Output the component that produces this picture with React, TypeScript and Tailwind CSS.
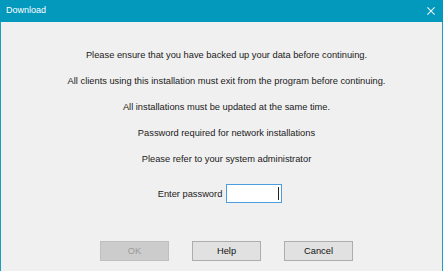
import React from "react";

export default function App() {
  const font = { fontFamily: '"Liberation Sans", Arial, sans-serif' };
  return (
    <div className="w-[444px] h-[271px] bg-white overflow-hidden" style={font}>
      <div className="w-[443px] h-[271px] flex flex-col border-x border-[#1a9fc0] bg-[#f0f0f0]">
        <div className="h-[22px] shrink-0 bg-[#0399bd] flex items-center justify-between pl-[6px] pr-[7px] -mx-px">
          <span className="text-[9px] text-white">Download</span>
          <svg width="8" height="8" viewBox="0 0 8 8" className="mr-[1px]">
            <path d="M0.4 0.4 L7.6 7.6 M7.6 0.4 L0.4 7.6" stroke="#e8f6fa" strokeWidth="1.1" fill="none" />
          </svg>
        </div>
        <div className="flex flex-col items-center pt-[25px] pl-[10px] text-[9.3px] leading-[16px] text-[#1a1a1a]">
          <div className="flex flex-col items-center gap-[10px]">
            <p>Please ensure that you have backed up your data before continuing.</p>
            <p>All clients using this installation must exit from the program before continuing.</p>
            <p>All installations must be updated at the same time.</p>
            <p>Password required for network installations</p>
            <p>Please refer to your system administrator</p>
          </div>
          <div className="mt-[17px] flex items-center gap-[4px] -ml-[13px]">
            <span>Enter password</span>
            <div className="w-[56px] h-[19px] border border-[#4c9ee0] bg-white flex items-center justify-end pr-[2px]">
              <div className="w-px h-[13px] bg-[#222]" />
            </div>
          </div>
          <div className="mt-[38px] flex gap-[23px]">
            <button className="w-[69px] h-[20px] bg-[#cccccc] border border-[#bfbfbf] text-[#9a9a9a] text-[9.3px]">OK</button>
            <button className="w-[69px] h-[20px] bg-[#e1e1e1] border border-[#adadad] text-[#111] text-[9.3px]">Help</button>
            <button className="w-[69px] h-[20px] bg-[#e1e1e1] border border-[#adadad] text-[#111] text-[9.3px]">Cancel</button>
          </div>
        </div>
      </div>
    </div>
  );
}
